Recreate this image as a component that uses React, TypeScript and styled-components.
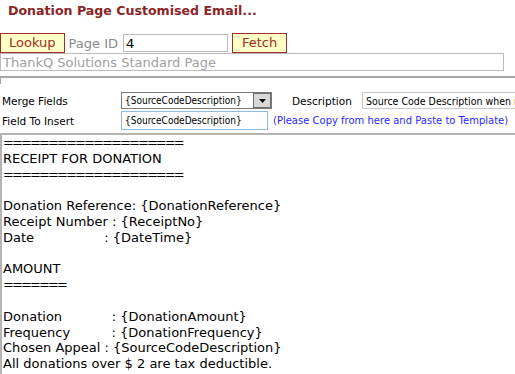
import React from "react";
import styled, { createGlobalStyle } from "styled-components";

const Global = createGlobalStyle`
  html, body { margin: 0; padding: 0; background: #fff; }
  body { font-family: "DejaVu Sans", Verdana, sans-serif; }
`;

const Page = styled.div`
  width: 515px;
  height: 374px;
  overflow: hidden;
  display: flex;
  flex-direction: column;
`;

const Title = styled.div`
  font-weight: bold;
  font-size: 12.6px;
  color: #8b2525;
  padding: 3px 0 0 8px;
  height: 33px;
  box-sizing: border-box;
  white-space: nowrap;
`;

const LookupRow = styled.div`
  display: flex;
  align-items: center;
  height: 20px;
`;

const Btn = styled.button<{ $px: number; $ml?: number }>`
  height: 20px;
  box-sizing: border-box;
  background: #ffffc6;
  border: 1px solid #a02c2c;
  color: #a02c2c;
  font-family: "DejaVu Sans", Verdana, sans-serif;
  font-size: 13px;
  padding: 0 ${(p) => p.$px}px;
  margin: 0 0 0 ${(p) => p.$ml ?? 0}px;
  line-height: 18px;
  flex-shrink: 0;
`;

const Label = styled.span<{ $size: number; $color?: string; $ml: number; $w?: number }>`
  font-size: ${(p) => p.$size}px;
  color: ${(p) => p.$color ?? "#000"};
  margin-left: ${(p) => p.$ml}px;
  width: ${(p) => (p.$w ? `${p.$w}px` : "auto")};
  flex-shrink: 0;
  white-space: nowrap;
`;

const TextBox = styled.div<{
  $w: number;
  $h: number;
  $border?: string;
  $ml: number;
  $font?: string;
  $size?: number;
  $color?: string;
  $pl?: number;
}>`
  width: ${(p) => p.$w}px;
  height: ${(p) => p.$h}px;
  box-sizing: border-box;
  border: 1px solid ${(p) => p.$border ?? "#bbb"};
  margin-left: ${(p) => p.$ml}px;
  font-family: ${(p) => p.$font ?? `"DejaVu Sans", Verdana, sans-serif`};
  font-size: ${(p) => p.$size ?? 13}px;
  color: ${(p) => p.$color ?? "#000"};
  padding-left: ${(p) => p.$pl ?? 2}px;
  display: flex;
  align-items: center;
  flex-shrink: 0;
  white-space: nowrap;
  overflow: hidden;
`;

const Divider = styled.div`
  margin-top: 5px;
  height: 8px;
  box-sizing: border-box;
  border-top: 2px solid #a8a8a8;
  border-left: 1px solid #a8a8a8;
`;

const FieldRow = styled.div<{ $mt: number; $h: number }>`
  display: flex;
  align-items: center;
  height: ${(p) => p.$h}px;
  margin-top: ${(p) => p.$mt}px;
  padding-left: 2px;
`;

const SelectBox = styled.div`
  width: 151px;
  height: 17px;
  box-sizing: border-box;
  border: 1px solid #7a7a7a;
  display: flex;
  align-items: stretch;
  font-family: "DejaVu Sans Condensed", Tahoma, sans-serif;
  font-size: 10px;
  flex-shrink: 0;
`;

const SelectText = styled.div`
  flex: 1;
  padding-left: 3px;
  display: flex;
  align-items: center;
  white-space: nowrap;
`;

const SelectArrow = styled.div`
  width: 16px;
  background: #d8d8d8;
  border: 1px solid #6e6e6e;
  display: flex;
  align-items: center;
  justify-content: center;
`;

const Hint = styled.span`
  font-size: 10px;
  color: #2a2aff;
  margin-left: 5px;
  white-space: nowrap;
`;

const Editor = styled.div`
  margin-top: 3px;
  flex: 1;
  border-top: 2px solid #b4b4b4;
  border-left: 2px solid #b4b4b4;
  padding: 0 0 0 1px;
  font-family: "DejaVu Sans", Verdana, sans-serif;
  font-size: 13px;
  line-height: 15.8px;
  white-space: pre;
  color: #000;
`;

const Rule = styled.span`
  letter-spacing: -1.9px;
`;

const lines: (string | { rule: string })[] = [
  { rule: "====================" },
  "RECEIPT FOR DONATION",
  { rule: "====================" },
  "",
  "Donation Reference: {DonationReference}",
  "Receipt Number : {ReceiptNo}",
  "Date                 : {DateTime}",
  "",
  "AMOUNT",
  { rule: "=======" },
  "",
  "Donation            : {DonationAmount}",
  "Frequency          : {DonationFrequency}",
  "Chosen Appeal : {SourceCodeDescription}",
  "All donations over $ 2 are tax deductible.",
];

export default function App() {
  return (
    <Page>
      <Global />
      <Title>Donation Page Customised Email...</Title>
      <LookupRow>
        <Btn $px={8}>Lookup</Btn>
        <Label $size={13} $color="#8a8a8a" $ml={4}>Page ID</Label>
        <TextBox $w={105} $h={18} $ml={5}>4</TextBox>
        <Btn $px={9} $ml={4}>Fetch</Btn>
      </LookupRow>
      <TextBox $w={504} $h={18} $ml={0} $color="#a0a0a0">ThankQ Solutions Standard Page</TextBox>
      <Divider />
      <FieldRow $mt={8} $h={17}>
        <Label $size={10.5} $ml={0} $w={119}>Merge Fields</Label>
        <SelectBox>
          <SelectText>{"{SourceCodeDescription}"}</SelectText>
          <SelectArrow>
            <svg width="7" height="4" viewBox="0 0 7 4"><path d="M0 0h7L3.5 4z" fill="#000" /></svg>
          </SelectArrow>
        </SelectBox>
        <Label $size={10.5} $ml={20} $w={70}>Description</Label>
        <TextBox
          $w={160}
          $h={17}
          $ml={0}
          $border="#c8c8c8"
          $font={`"DejaVu Sans Condensed", Tahoma, sans-serif`}
          $size={10.5}
          $pl={3}
        >
          Source Code Description when no Source Code
        </TextBox>
      </FieldRow>
      <FieldRow $mt={2} $h={19}>
        <Label $size={10.5} $ml={0} $w={119}>Field To Insert</Label>
        <TextBox
          $w={147}
          $h={19}
          $ml={0}
          $border="#8cbbe6"
          $font={`"DejaVu Sans Condensed", Tahoma, sans-serif`}
          $size={10}
          $pl={3}
        >
          {"{SourceCodeDescription}"}
        </TextBox>
        <Hint>(Please Copy from here and Paste to Template)</Hint>
      </FieldRow>
      <Editor>
        {lines.map((l, i) => (
          <React.Fragment key={i}>
            {typeof l === "string" ? l : <Rule>{l.rule}</Rule>}
            {i < lines.length - 1 ? "\n" : ""}
          </React.Fragment>
        ))}
      </Editor>
    </Page>
  );
}
